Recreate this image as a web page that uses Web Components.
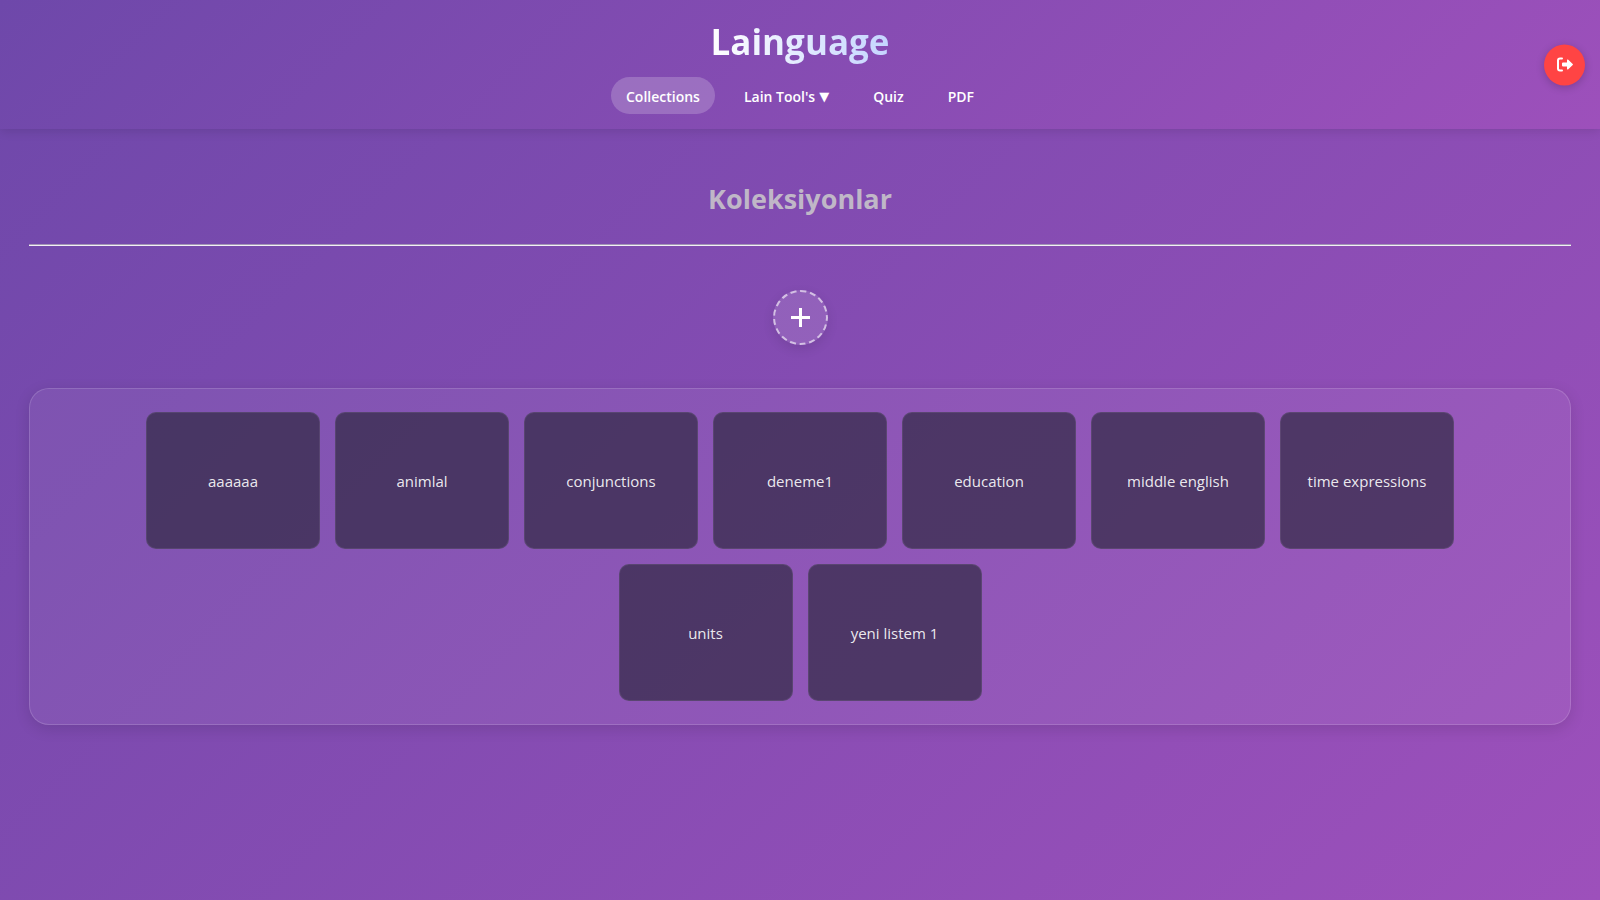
<!DOCTYPE html>
<html lang="tr">
<head>
<meta charset="utf-8">
<title>Lainguage</title>
<style>
html { min-height: 100%; background: linear-gradient(135deg, #6e48aa, #9d50bb) fixed; }
body { margin: 0; font-family: "Segoe UI", "Open Sans", "Noto Sans", sans-serif; color: #fff; }
</style>
</head>
<body>
<site-header>
  <nav-item href="#collections" active>Collections</nav-item>
  <nav-item href="#tools">Lain Tool's<span slot="mark">▼</span></nav-item>
  <nav-item href="#quiz">Quiz</nav-item>
  <nav-item href="#pdf">PDF</nav-item>
</site-header>
<collections-page>
  <collection-card>aaaaaa</collection-card>
  <collection-card>animlal</collection-card>
  <collection-card>conjunctions</collection-card>
  <collection-card>deneme1</collection-card>
  <collection-card>education</collection-card>
  <collection-card>middle english</collection-card>
  <collection-card>time expressions</collection-card>
  <collection-card>units</collection-card>
  <collection-card>yeni listem 1</collection-card>
</collections-page>
<script>
const define = (name, html, ready) => customElements.define(name, class extends HTMLElement {
  constructor() {
    super();
    this.attachShadow({ mode: "open" }).innerHTML = html;
  }
  connectedCallback() { if (ready) ready(this); }
});

define("site-header", `
<style>
:host { display: flex; flex-direction: column; align-items: center; position: relative; box-sizing: border-box;
  padding: 16px 30px 15px; background: linear-gradient(135deg, #6e48aa, #9d50bb); box-shadow: 0 2px 10px rgba(0,0,0,.12); }
h1 { margin: 0 0 9px; font-size: 35px; line-height: 52px; font-weight: 700;
  background: linear-gradient(90deg, #fff, #c5d5ff); -webkit-background-clip: text; background-clip: text; color: transparent; }
nav { display: flex; gap: 14px; }
logout-button { position: absolute; right: 15px; top: 50%; transform: translateY(-50%); }
</style>
<h1>Lainguage</h1>
<nav><slot></slot></nav>
<logout-button></logout-button>`);

define("nav-item", `
<style>
:host { display: block; }
a { display: flex; align-items: center; gap: 4px; padding: 9px 15px 7px; border-radius: 20px; color: #fff; text-decoration: none;
  font-size: 14px; line-height: 21px; font-weight: 600; }
:host([active]) a { background: rgba(255,255,255,.2); }
::slotted([slot=mark]) { font: 13px/20px "DejaVu Sans", sans-serif; }
</style>
<a><slot></slot><slot name="mark"></slot></a>`, el => {
  el.shadowRoot.querySelector("a").setAttribute("href", el.getAttribute("href"));
});

define("logout-button", `
<style>
:host { display: block; }
button { display: flex; align-items: center; justify-content: center; width: 41px; height: 41px; padding: 0; border: 0;
  border-radius: 50%; background: #ff4444; box-shadow: 0 2px 8px rgba(0,0,0,.2); cursor: pointer; }
svg { width: 16px; height: 16px; }
</style>
<button aria-label="Logout"><svg viewBox="0 0 16 16" fill="#fff"><path d="M5 1H3a3 3 0 0 0-3 3v8a3 3 0 0 0 3 3h2a1 1 0 0 0 0-2H3a1 1 0 0 1-1-1V4a1 1 0 0 1 1-1h2a1 1 0 0 0 0-2zM15.700 8.500a.75.75 0 0 0 0-1.060L11.300 3.200A.75.75 0 0 0 10 3.750V6H6a1 1 0 0 0-1 1v2a1 1 0 0 0 1 1h4v2.250a.75.75 0 0 0 1.300.530z"/></svg></button>`);

define("collections-page", `
<style>
:host { display: block; padding: 46px 29px; }
h2 { margin: 0; font-size: 27px; line-height: 48px; font-weight: 700; color: rgba(204,204,204,.85); text-align: center; }
hr { margin: 21px 0 0; border: 0; border-top: 1px solid #a396b5; border-bottom: 1px solid #f2eff5; }
.add { display: flex; justify-content: center; padding: 44px 0 43px; }
.list { display: flex; flex-wrap: wrap; justify-content: center; gap: 15px; padding: 23px; border: 1px solid rgba(255,255,255,.15);
  border-radius: 20px; background: rgba(255,255,255,.06); box-shadow: 0 4px 15px rgba(0,0,0,.12); }
</style>
<main>
<h2>Koleksiyonlar</h2>
<hr>
<div class="add"><add-button></add-button></div>
<div class="list"><slot></slot></div>
</main>`);

define("add-button", `
<style>
:host { display: block; }
button { display: flex; align-items: center; justify-content: center; width: 55px; height: 55px; padding: 0;
  border: 2px dashed rgba(255,255,255,.6); border-radius: 50%; background: rgba(255,255,255,.12);
  box-shadow: 0 4px 12px rgba(0,0,0,.1); cursor: pointer; }
svg { width: 19px; height: 19px; }
</style>
<button aria-label="Add collection"><svg viewBox="0 0 19 19"><path d="M9.500 0v19M0 9.500h19" stroke="#fff" stroke-width="3"/></svg></button>`);

define("collection-card", `
<style>
:host { display: block; width: 174px; }
button { display: flex; align-items: center; justify-content: center; width: 100%; height: 137px; padding: 0 10px;
  border: 1px solid rgba(255,255,255,.08); border-radius: 10px; background: rgba(48,42,67,.7);
  color: rgba(255,255,255,.9); font: inherit; font-size: 15px; line-height: 24px; cursor: pointer; }
</style>
<button><slot></slot></button>`);
</script>
</body>
</html>
